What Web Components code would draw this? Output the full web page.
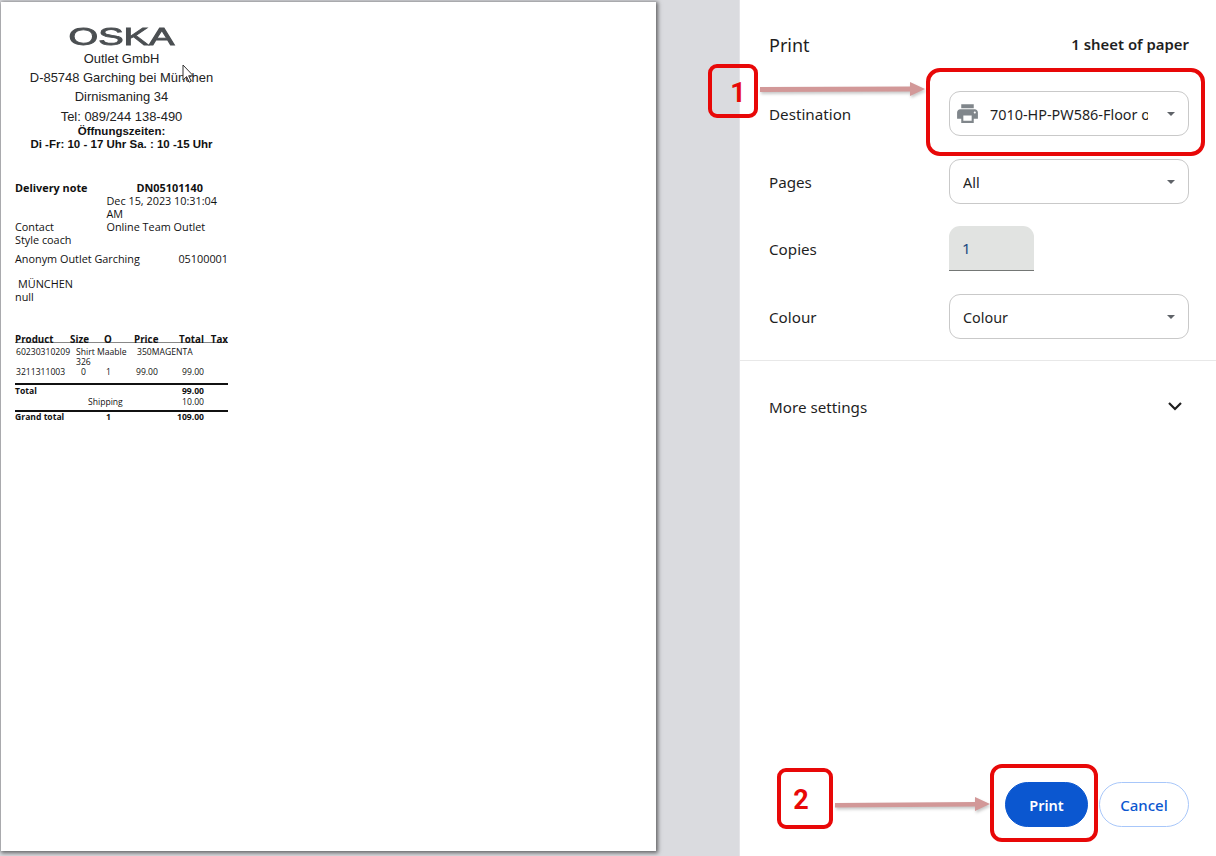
<!DOCTYPE html>
<html lang="en">
<head>
<meta charset="utf-8">
<title>Print</title>
<style>
  html, body { margin: 0; height: 100%; overflow: hidden; background: #fff; }
</style>
</head>
<body>
<print-dialog></print-dialog>

<script>
class DocPaper extends HTMLElement {
  constructor() {
    super();
    this.attachShadow({ mode: 'open' });
  }

  connectedCallback() {
    this.shadowRoot.innerHTML = `
      <style>
        :host {
          display: block;
          width: 655px;
          height: 849px;
          background: #fff;
          box-shadow: 1px 1px 4px 1px rgba(0, 0, 0, 0.55);
          color: #111;
          box-sizing: border-box;
          padding: 24px 0 0 14px;
          font-family: "Open Sans", "Noto Sans", sans-serif;
          font-size: 10.85px;
          line-height: 13px;
          overflow: hidden;
        }
        .letterhead {
          width: 213px;
          text-align: center;
          font-family: "Liberation Sans", Arial, sans-serif;
          font-size: 12.95px;
          line-height: 19.4px;
          color: #222;
        }
        .logo {
          height: 22.6px;
          font-size: 23px;
          line-height: 23px;
          color: #4b4f52;
          transform: scaleX(1.66);
          -webkit-text-stroke: 0.8px #4b4f52;
        }
        .hours {
          font-size: 11.5px;
          font-weight: bold;
          line-height: 12.5px;
          color: #111;
          margin-top: -1px;
        }
        .meta {
          margin-top: 31px;
          width: 213px;
          display: grid;
          grid-template-columns: 91.5px 1fr;
        }
        .num { font-weight: bold; padding-left: 30px; }
        .b { font-weight: bold; }
        .span2 { grid-column: 1 / 3; }
        .customer {
          margin-top: 6px;
          width: 213px;
          display: flex;
          justify-content: space-between;
        }
        .city { margin-top: 12px; }
        .city div:first-child { padding-left: 3px; }
        .lines {
          margin-top: 31px;
          width: 213px;
          font-size: 8.6px;
          line-height: 10px;
        }
        .row {
          display: grid;
          grid-template-columns: 55px 34px 30px 45px 25px 24px;
          white-space: nowrap;
        }
        .head {
          font-size: 9.8px;
          font-weight: bold;
          line-height: 12px;
          border-bottom: 1px solid #888;
          height: 8px;
        }
        .r { text-align: right; }
        .pad { padding-left: 1px; }
        .size { padding-left: 6px; }
        .qty { padding-left: 2px; }
        .zero { padding-left: 11px; }
        .price { padding-left: 2px; }
        .items { padding-top: 4px; }
        .sum { border-top: 2px solid #111; }
        .sum.first { margin-top: 6px; padding-top: 1px; }
        .sum.last { margin-top: 3px; }
        .shipping { margin-top: 1px; }
        .wide { grid-column: 1 / 4; }
        .ship { padding-left: 73px; }
        .grand { margin-left: -5px; }
      </style>
      <div class="letterhead">
        <div class="logo">OSKA</div>
        <div>Outlet GmbH</div>
        <div>D-85748 Garching bei München</div>
        <div>Dirnismaning 34</div>
        <div>Tel: 089/244 138-490</div>
        <div class="hours">Öffnungszeiten:<br>Di -Fr: 10 - 17 Uhr Sa. : 10 -15 Uhr</div>
      </div>
      <div class="meta">
        <div class="b">Delivery note</div>
        <div class="num">DN05101140</div>
        <div></div>
        <div>Dec 15, 2023 10:31:04 AM</div>
        <div>Contact</div>
        <div>Online Team Outlet</div>
        <div class="span2">Style coach</div>
      </div>
      <div class="customer"><span>Anonym Outlet Garching</span><span>05100001</span></div>
      <div class="city"><div>MÜNCHEN</div><div>null</div></div>
      <div class="lines">
        <div class="row head">
          <span>Product</span><span>Size</span><span>O</span><span>Price</span><span class="r">Total</span><span class="r">Tax</span>
        </div>
        <div class="row items">
          <span class="pad">60230310209</span><span class="size">Shirt Maable<br>326</span><span></span><span style="padding-left:3px">350MAGENTA</span>
        </div>
        <div class="row">
          <span class="pad">3211311003</span><span class="zero">0</span><span class="qty">1</span><span class="price">99.00</span><span class="r">99.00</span>
        </div>
        <div class="row sum first">
          <span class="wide b">Total</span><span></span><span class="r b">99.00</span>
        </div>
        <div class="row shipping">
          <span class="wide ship">Shipping</span><span></span><span class="r">10.00</span>
        </div>
        <div class="row sum last">
          <span class="b">Grand total</span><span></span><span class="qty b">1</span><span></span><span class="r b grand">109.00</span>
        </div>
      </div>
    `;
  }
}

class PrintField extends HTMLElement {
  constructor() {
    super();
    this.attachShadow({ mode: 'open' });
  }

  connectedCallback() {
    const label = this.getAttribute('label') || '';
    this.shadowRoot.innerHTML = `
      <style>
        :host {
          display: flex;
          align-items: center;
          height: 45px;
          margin-bottom: 23px;
        }
        .label { width: 180px; }
      </style>
      <div class="label">${label}</div>
      <slot></slot>
    `;
  }
}

class PrintSelect extends HTMLElement {
  constructor() {
    super();
    this.attachShadow({ mode: 'open' });
  }

  connectedCallback() {
    const icon = this.hasAttribute('printer')
      ? `<svg width="25" height="25" viewBox="0 0 24 24" fill="#80868b"><path d="M19 8H5c-1.66 0-3 1.34-3 3v6h4v4h12v-4h4v-6c0-1.66-1.34-3-3-3zm-3 11H8v-5h8v5zm3-7c-.55 0-1-.45-1-1s.45-1 1-1 1 .45 1 1-.45 1-1 1zm-1-9H6v4h12V3z"/></svg>`
      : '';
    this.shadowRoot.innerHTML = `
      <style>
        :host {
          display: flex;
          align-items: center;
          box-sizing: border-box;
          width: 240px;
          height: 45px;
          border: 1px solid #c9c9c9;
          border-radius: 11px;
          padding: 0 13px 0 13px;
          background: #fff;
          font-size: 14.4px;
        }
        svg { flex: none; margin: 0 10px 0 -8px; }
        .value {
          flex: 1;
          min-width: 0;
          max-width: 158px;
          margin-top: 2px;
          overflow: hidden;
          white-space: nowrap;
        }
        .caret {
          margin-left: auto;
          width: 0;
          height: 0;
          border-left: 4.5px solid transparent;
          border-right: 4.5px solid transparent;
          border-top: 4.5px solid #5f6368;
        }
      </style>
      ${icon}
      <div class="value"><slot></slot></div>
      <div class="caret"></div>
    `;
  }
}

class CopiesInput extends HTMLElement {
  constructor() {
    super();
    this.attachShadow({ mode: 'open' });
  }

  connectedCallback() {
    this.shadowRoot.innerHTML = `
      <style>
        :host {
          display: flex;
          align-items: center;
          box-sizing: border-box;
          width: 85px;
          height: 45px;
          padding-left: 13px;
          background: #e1e3e1;
          border-bottom: 1px solid #747775;
          border-radius: 11px 11px 0 0;
          color: #1a4a80;
        }
      </style>
      <slot></slot>
    `;
  }
}

class PillButton extends HTMLElement {
  constructor() {
    super();
    this.attachShadow({ mode: 'open' });
  }

  connectedCallback() {
    this.shadowRoot.innerHTML = `
      <style>
        :host {
          display: flex;
          align-items: center;
          justify-content: center;
          box-sizing: border-box;
          height: 45px;
          border-radius: 23px;
          font-weight: 500;
          font-size: 15px;
          border: 1px solid #a8c7fa;
          color: #0b57d0;
          background: #fff;
          width: 90px;
        }
        :host([primary]) {
          width: 83px;
          font-weight: 600;
          font-size: 14.5px;
          background: #0b57d0;
          border-color: #0b57d0;
          color: #fff;
        }
      </style>
      <slot></slot>
    `;
  }
}

class NoteBox extends HTMLElement {
  constructor() {
    super();
    this.attachShadow({ mode: 'open' });
  }

  connectedCallback() {
    this.shadowRoot.innerHTML = `
      <style>
        :host {
          position: absolute;
          box-sizing: border-box;
          display: flex;
          align-items: center;
          justify-content: center;
          border: 4.5px solid #e80808;
          border-radius: 9px;
          color: #e80808;
          font-family: Roboto, "Liberation Sans", sans-serif;
          font-size: 27px;
          font-weight: 700;
        }
      </style>
      <slot></slot>
    `;
  }
}

class PrintDialog extends HTMLElement {
  constructor() {
    super();
    this.attachShadow({ mode: 'open' });
  }

  connectedCallback() {
    this.shadowRoot.innerHTML = `
      <style>
        :host {
          display: grid;
          grid-template-columns: 739px 477px;
          height: 856px;
          position: relative;
          overflow: hidden;
          font-family: "Noto Sans", "Open Sans", sans-serif;
          font-size: 15.2px;
          color: #1f1f1f;
        }
        .preview {
          background: #dadbdf;
          padding: 2px 0 0 1px;
        }
        .side {
          display: flex;
          flex-direction: column;
          background: #fff;
          border-left: 1px solid #e4e4e8;
          box-sizing: border-box;
        }
        .head {
          display: flex;
          justify-content: space-between;
          align-items: center;
          padding: 30px 27px 0 29px;
          height: 59px;
          box-sizing: border-box;
        }
        .title { font-size: 18px; line-height: 26px; }
        .sheets { font-weight: 600; font-size: 14.9px; margin-top: -1px; }
        .fields {
          padding: 0 27px 0 29px;
        }
        .more {
          margin-top: -2px;
          border-top: 1px solid #e8e8e8;
          padding: 0 27px 0 29px;
          height: 92px;
          box-sizing: border-box;
          display: flex;
          align-items: center;
          justify-content: space-between;
        }
        .more svg { margin-right: 2px; margin-top: -1px; }
        .actions {
          margin-top: auto;
          display: flex;
          justify-content: flex-end;
          gap: 11px;
          padding: 0 27px 29px 0;
        }
        .arrow {
          position: absolute;
          overflow: visible;
          filter: drop-shadow(1px 2px 1.5px rgba(0, 0, 0, 0.22));
        }
        .cursor { position: absolute; left: 182px; top: 64px; }
      </style>
      <div class="preview"><doc-paper></doc-paper></div>
      <div class="side">
        <div class="head"><span class="title">Print</span><span class="sheets">1 sheet of paper</span></div>
        <div class="fields">
          <print-field label="Destination" style="margin-top:32px"><print-select printer>7010-HP-PW586-Floor of</print-select></print-field>
          <print-field label="Pages" style="margin-bottom:22px"><print-select>All</print-select></print-field>
          <print-field label="Copies"><copies-input>1</copies-input></print-field>
          <print-field label="Colour"><print-select>Colour</print-select></print-field>
        </div>
        <div class="more">
          <span>More settings</span>
          <svg width="24" height="24" viewBox="0 0 24 24" fill="none" stroke="#1f1f1f" stroke-width="2.2"><path d="M6 9l6 6 6-6"/></svg>
        </div>
        <div class="actions">
          <pill-button primary>Print</pill-button>
          <pill-button>Cancel</pill-button>
        </div>
      </div>

      <svg class="cursor" width="14" height="20" viewBox="0 0 14 20"><path d="M1 1v15l3.6-3.4 2.6 5.6 2-1-2.5-5.4h4.6z" fill="#fff" stroke="#333" stroke-width="1"/></svg>

      <note-box style="left:708px;top:64px;width:50px;height:54px;padding:4px 0 0 10px;">1</note-box>
      <note-box style="left:926px;top:68px;width:279px;height:88px;border-radius:14px;"></note-box>
      <note-box style="left:777px;top:768px;width:56px;height:61px;padding:3px 8px 0 0;">2</note-box>
      <note-box style="left:990px;top:764px;width:108px;height:78px;border-radius:12px;"></note-box>

      <svg class="arrow" style="left:0;top:0" width="1216" height="856" fill="#d29898">
        <path d="M760 87l150-.5V82l15 7-15 7v-4.500l-150 .5z"/>
        <path d="M835 803l140-1v-5l15 7-15 7v-4.500l-140 1z"/>
      </svg>
    `;
  }
}

customElements.define('doc-paper', DocPaper);
customElements.define('print-field', PrintField);
customElements.define('print-select', PrintSelect);
customElements.define('copies-input', CopiesInput);
customElements.define('pill-button', PillButton);
customElements.define('note-box', NoteBox);
customElements.define('print-dialog', PrintDialog);
</script>
</body>
</html>
